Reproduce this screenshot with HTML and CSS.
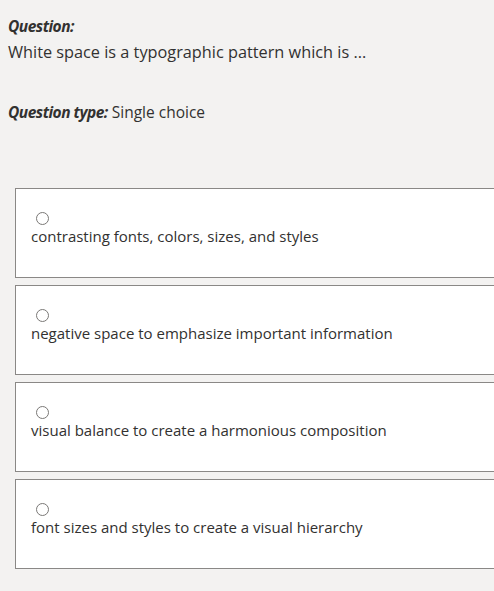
FILE: index.html
```html
<!DOCTYPE html>
<html lang="en">
<head>
<meta charset="utf-8">
<title>Question</title>
<link rel="stylesheet" href="styles.css">
</head>
<body>
<main class="page">
  <section class="question">
    <div class="label">Question:</div>
    <div class="text">White space is a typographic pattern which is ...</div>
  </section>
  <div class="type"><span class="label">Question type:</span> Single choice</div>
  <div class="options">
    <div class="option"><span class="radio"></span><div class="option-text">contrasting fonts, colors, sizes, and styles</div></div>
    <div class="option"><span class="radio"></span><div class="option-text">negative space to emphasize important information</div></div>
    <div class="option"><span class="radio"></span><div class="option-text">visual balance to create a harmonious composition</div></div>
    <div class="option"><span class="radio"></span><div class="option-text">font sizes and styles to create a visual hierarchy</div></div>
  </div>
</main>
</body>
</html>
```
FILE: styles.css
```css
html, body {
  margin: 0;
  padding: 0;
  overflow: hidden;
}
body {
  background: #f3f2f1;
  color: #323130;
  font-family: "Open Sans", "Noto Sans", sans-serif;
  font-size: 15px;
}
.page {
  padding: 16px 0 0 8px;
}
.label {
  font-weight: 700;
  font-style: italic;
  letter-spacing: -0.5px;
}
.question .label {
  line-height: 20px;
  font-size: 15.5px;
}
.question .text {
  margin-top: 4px;
  line-height: 24px;
  font-size: 16.3px;
}
.type {
  margin-top: 36px;
  line-height: 24px;
  font-size: 15.5px;
}
.options {
  margin-top: 64px;
  margin-left: 7px;
  margin-right: -20px;
  display: flex;
  flex-direction: column;
  gap: 7px;
}
.option {
  background: #fff;
  border: 1px solid #8a8886;
  height: 90px;
  box-sizing: border-box;
  padding: 23px 15px 0;
}
.radio {
  display: block;
  width: 13px;
  height: 13px;
  box-sizing: border-box;
  border: 1px solid #7a7876;
  border-radius: 50%;
  margin-left: 5px;
}
.option-text {
  margin-top: 1px;
  line-height: 20px;
}
```
